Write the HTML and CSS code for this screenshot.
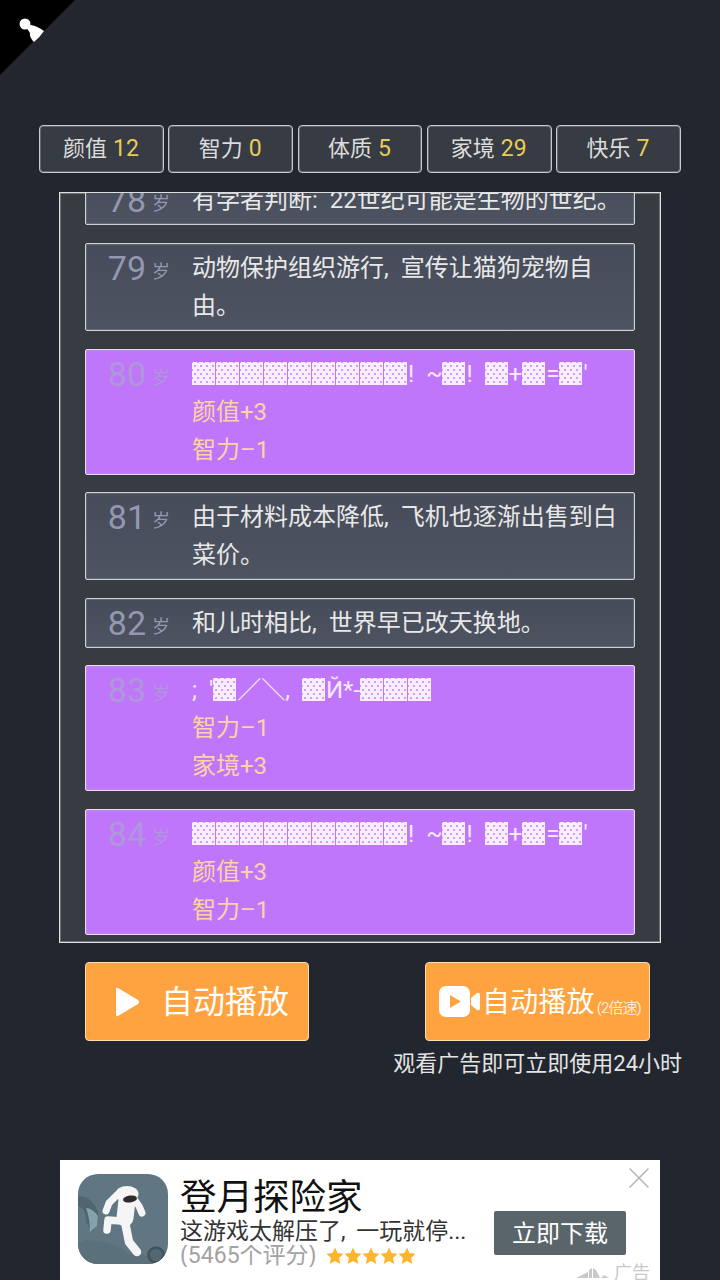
FILE: index.html
```html
<!DOCTYPE html>
<html lang="zh-CN">
<head>
<meta charset="utf-8">
<title>人生重开</title>
<link rel="stylesheet" href="styles.css">
</head>
<body>
<svg class="corner" width="75" height="75" viewBox="0 0 75 75" aria-hidden="true">
  <polygon points="0,0 75,0 0,75" fill="#000"/>
  <circle cx="25" cy="24" r="5.500" fill="#fff"/>
  <path d="M26 27 L31 25 Q37 26 44 31 Q40 37 34 42 Q29 37 30 33 Z" fill="#fff"/>
</svg>
<main class="page">
  <section class="stats">
    <div class="stat">颜值 <b>12</b></div>
    <div class="stat">智力 <b>0</b></div>
    <div class="stat">体质 <b>5</b></div>
    <div class="stat">家境 <b>29</b></div>
    <div class="stat">快乐 <b>7</b></div>
  </section>
  <section class="panel">
    <div class="row"><div class="age"><span class="num">78</span><span class="unit">岁</span></div><div class="text"><p>有学者判断: 22世纪可能是生物的世纪。</p></div></div>
    <div class="row"><div class="age"><span class="num">79</span><span class="unit">岁</span></div><div class="text"><p>动物保护组织游行, 宣传让猫狗宠物自由。</p></div></div>
    <div class="row hot"><div class="age"><span class="num">80</span><span class="unit">岁</span></div><div class="text"><p><i>▓</i><i>▓</i><i>▓</i><i>▓</i><i>▓</i><i>▓</i><i>▓</i><i>▓</i><i>▓</i>! ~<i>▓</i>! <i>▓</i>+<i>▓</i>=<i>▓</i>'</p><p class="fx">颜值+3</p><p class="fx">智力–1</p></div></div>
    <div class="row"><div class="age"><span class="num">81</span><span class="unit">岁</span></div><div class="text"><p>由于材料成本降低, 飞机也逐渐出售到白菜价。</p></div></div>
    <div class="row"><div class="age"><span class="num">82</span><span class="unit">岁</span></div><div class="text"><p>和儿时相比, 世界早已改天换地。</p></div></div>
    <div class="row hot"><div class="age"><span class="num">83</span><span class="unit">岁</span></div><div class="text"><p>; '<i>▓</i>／＼, <i>▓</i>Й*-<i>▓</i><i>▓</i><i>▓</i></p><p class="fx">智力–1</p><p class="fx">家境+3</p></div></div>
    <div class="row hot"><div class="age"><span class="num">84</span><span class="unit">岁</span></div><div class="text"><p><i>▓</i><i>▓</i><i>▓</i><i>▓</i><i>▓</i><i>▓</i><i>▓</i><i>▓</i><i>▓</i>! ~<i>▓</i>! <i>▓</i>+<i>▓</i>=<i>▓</i>'</p><p class="fx">颜值+3</p><p class="fx">智力–1</p></div></div>
  </section>
  <section class="actions">
    <button class="btn">
      <svg class="play" width="26" height="32" viewBox="0 0 26 32" aria-hidden="true"><path d="M3 2 L23 14 Q25 16 23 18 L3 30 Q1 31 1 29 L1 3 Q1 1 3 2 Z" fill="#fff"/></svg>
      <span class="btn-a">自动播放</span>
    </button>
    <button class="btn btn-video">
      <svg width="41" height="31" viewBox="0 0 41 31" aria-hidden="true"><rect x="0" y="0" width="31" height="31" rx="7" fill="#fff"/><path d="M32 12 L38 7 Q41 6 41 9 L41 22 Q41 25 38 24 L32 19 Z" fill="#fff"/><path d="M11 9 L21 15 Q22 15.500 21 16 L11 22 Z" fill="#ffa33f"/></svg>
      <span class="btn-b">自动播放</span><span class="btn-c">(2倍速)</span>
    </button>
  </section>
  <p class="note">观看广告即可立即使用24小时</p>
  <aside class="ad">
    <svg class="ad-icon" width="90" height="90" viewBox="0 0 90 90" aria-hidden="true">
      <defs><clipPath id="ic"><rect width="90" height="90" rx="20"/></clipPath></defs>
      <g clip-path="url(#ic)">
        <rect width="90" height="90" fill="#607783"/>
        <path d="M0 22 Q14 22 20 38 Q22 50 14 58 L8 48 Q8 34 0 32 Z" fill="#4f6671"/>
        <path d="M8 34 Q14 34 20 42 L19 52 L12 58 Q12 44 8 34 Z" fill="#85a2ab"/>
        <path d="M8 66 Q40 68 50 80 L90 84 L90 90 L0 90 L0 70 Z" fill="#5a707b"/>
        <circle cx="78" cy="81" r="7.500" fill="#536873" stroke="#40535c" stroke-width="2.500"/>
        <g fill="none" stroke="#f5f5f5" stroke-linecap="round" stroke-linejoin="round">
          <path d="M39 21 L31 29 L28 37" stroke-width="7"/>
          <path d="M56 25 L61 32 L64 39" stroke-width="7"/>
          <path d="M49 26 L47 44" stroke-width="17"/>
          <path d="M43 47 L30 46 L29 56" stroke-width="7.500"/>
          <path d="M47 48 L51 68 L59 78" stroke-width="8.500"/>
        </g>
        <ellipse cx="49" cy="20" rx="11.500" ry="8" fill="#f5f5f5"/>
        <ellipse cx="52" cy="25" rx="7" ry="3.500" fill="#2e2a30" transform="rotate(-8 52 25)"/>
      </g>
    </svg>
    <div class="ad-body">
      <h2 class="ad-title">登月探险家</h2>
      <p class="ad-desc">这游戏太解压了, 一玩就停...</p>
      <p class="ad-rate"><span>(5465个评分)</span>
        <svg width="90" height="18" viewBox="0 0 90 18" aria-hidden="true" fill="#fdb52f">
          <polygon points="9,0.500 11.500,6 17.500,6.800 13,11 14.300,17 9,14 3.700,17 5,11 .5,6.800 6.500,6"/>
          <polygon transform="translate(18)" points="9,0.500 11.500,6 17.500,6.800 13,11 14.300,17 9,14 3.700,17 5,11 .5,6.800 6.500,6"/>
          <polygon transform="translate(36)" points="9,0.500 11.500,6 17.500,6.800 13,11 14.300,17 9,14 3.700,17 5,11 .5,6.800 6.500,6"/>
          <polygon transform="translate(54)" points="9,0.500 11.500,6 17.500,6.800 13,11 14.300,17 9,14 3.700,17 5,11 .5,6.800 6.500,6"/>
          <polygon transform="translate(72)" points="9,0.500 11.500,6 17.500,6.800 13,11 14.300,17 9,14 3.700,17 5,11 .5,6.800 6.500,6"/>
        </svg>
      </p>
    </div>
    <div class="ad-cta">立即下载</div>
    <svg class="ad-close" width="20" height="20" viewBox="0 0 20 20" aria-hidden="true"><path d="M0.500 0.500 L19.500 19.500 M19.500 0.500 L0.500 19.500" stroke="#b5b5b5" stroke-width="1.500"/></svg>
    <div class="ad-tag">
      <svg width="34" height="12" viewBox="0 0 34 12" aria-hidden="true"><path d="M0 11 L12 5 L12 11 Z M13 11 L13 3 L16 1 L16 11 Z M17 11 L17 1 L20 3 L24 11 Z M25 11 L28 8 L33 11 Z" fill="#c9c9c9"/></svg>
      <span>广告</span>
    </div>
  </aside>
</main>
</body>
</html>
```

FILE: styles.css
```css
* { box-sizing: border-box; }
html, body { margin: 0; padding: 0; }
body {
  width: 720px;
  height: 1280px;
  overflow: hidden;
  background: #22262f;
  color: #e6e6e6;
  font-family: Roboto, "Noto Sans CJK SC", sans-serif;
}
p, h2 { margin: 0; font-weight: 400; }
.corner { position: absolute; left: 0; top: 0; }
.page {
  display: flex;
  flex-direction: column;
  height: 1280px;
  padding-top: 125px;
}
.stats {
  display: flex;
  gap: 4.4px;
  margin: 0 39px;
}
.stat {
  flex: 1;
  height: 48px;
  display: flex;
  align-items: baseline;
  justify-content: center;
  gap: 6px;
  padding-right: 1px;
  background: #373b43;
  border: 1px solid #c8cacd;
  border-radius: 4px;
  box-shadow: inset 0 0 0 1px rgba(200, 202, 205, .3);
  font-size: 22px;
  line-height: 45px;
  color: #dcdcdc;
}
.stat b { font-weight: 400; font-size: 23px; color: #e9cb5b; }
.panel {
  height: 751px;
  margin: 19px 59px 0;
  padding: 0 25px 7px;
  display: flex;
  flex-direction: column;
  justify-content: flex-end;
  gap: 17.6px;
  overflow: hidden;
  background: #373b42;
  border: 1px solid #dedede;
  box-shadow: inset 0 0 0 1px rgba(222, 222, 222, .35);
}
.row {
  flex: none;
  display: flex;
  padding: 5px 0;
  background: linear-gradient(#464c59, #4d5361);
  border: 1px solid #cfd0d2;
  border-radius: 2px;
  box-shadow: inset 0 0 0 1px rgba(207, 208, 210, .2);
}
.age {
  flex: none;
  width: 106px;
  height: 38px;
  padding-right: 22px;
  text-align: right;
  line-height: 38px;
  white-space: nowrap;
  color: #9397b2;
}
.num { font-size: 34px; font-weight: 400; }
.unit { margin-left: 6px; font-size: 18px; vertical-align: 2px; }
.text {
  flex: 1;
  padding-right: 8px;
  font-size: 24px;
  line-height: 38px;
  word-spacing: 6px;
  color: #e8e8e8;
}
.text i {
  display: inline-block;
  width: 23px;
  height: 23px;
  margin-right: 1px;
  vertical-align: -3px;
  overflow: hidden;
  font-style: normal;
  font-size: 20px;
  line-height: 23px;
  color: transparent;
  background-color: #f8eeff;
  background-image:
    radial-gradient(circle, #cf9efb 1.1px, transparent 1.500px),
    radial-gradient(circle, #cf9efb 1.1px, transparent 1.500px);
  background-size: 6px 8px;
  background-position: 0 0, 3px 4px;
}
.hot { background: #c076fb; border-color: #e8d6f8; }
.hot .age { color: #b096da; }
.hot .text { color: #f6e9fe; }
.fx { color: #fcd3a6; }
.actions {
  display: flex;
  justify-content: space-between;
  margin: 19px 70px 0 85px;
}
.btn {
  width: 224px;
  height: 79px;
  display: flex;
  align-items: center;
  padding: 0 0 0 29px;
  gap: 20px;
  background: #ffa340;
  border: 1px solid #fbdcb6;
  border-radius: 4px;
  color: #fff;
  font-family: inherit;
}
.btn-a { font-size: 32px; margin-bottom: 5px; }
.btn-video { width: 225px; padding-left: 13px; gap: 2px; }
.btn-b { font-size: 28px; letter-spacing: .2px; margin-bottom: 4px; }
.btn-c { font-size: 15px; letter-spacing: -1px; margin-top: 10px; color: #ffe9d0; }
.note {
  margin: 9px 38px 0 0;
  text-align: right;
  font-size: 22px;
  line-height: 28px;
  color: #e4e4e4;
}
.ad {
  position: relative;
  flex: none;
  height: 120px;
  margin: auto 60px 0;
  padding: 14px 34px 0 18px;
  display: flex;
  overflow: hidden;
  background: #fff;
  color: #111;
}
.ad-icon { flex: none; }
.ad-body { flex: 1; margin-left: 12px; min-width: 0; }
.ad-title { font-size: 36.500px; line-height: 43px; margin-top: 2px; color: #111; }
.ad-desc { font-size: 23px; line-height: 26px; word-spacing: 5px; color: #333; white-space: nowrap; }
.ad-rate {
  display: flex;
  align-items: center;
  gap: 9px;
  height: 22px;
  overflow: hidden;
  font-size: 23px;
  line-height: 22px;
  color: #a3a3a3;
}
.ad-cta {
  flex: none;
  width: 132px;
  height: 44px;
  margin-top: 37px;
  padding-bottom: 3px;
  display: flex;
  align-items: center;
  justify-content: center;
  background: #5a646b;
  border-radius: 2px;
  color: #fff;
  font-size: 24px;
}
.ad-close { position: absolute; top: 8px; right: 11px; }
.ad-tag {
  position: absolute;
  right: 10px;
  bottom: -4px;
  display: flex;
  align-items: center;
  gap: 4px;
  font-size: 18px;
  line-height: 22px;
  color: #c9c9c9;
}
```
